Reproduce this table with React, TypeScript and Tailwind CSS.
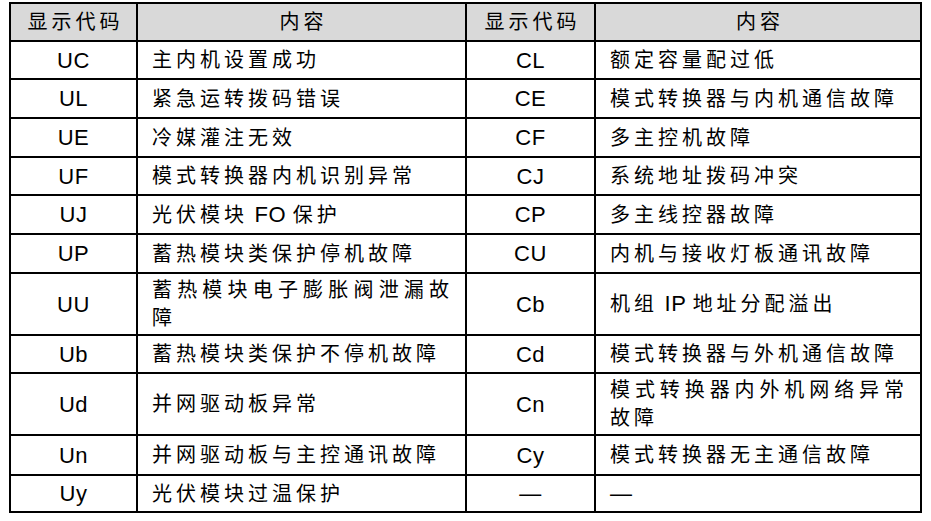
const ROWS: [string, string, string, string, number][] = [
  ["UC", "主内机设置成功", "CL", "额定容量配过低", 38],
  ["UL", "紧急运转拨码错误", "CE", "模式转换器与内机通信故障", 39],
  ["UE", "冷媒灌注无效", "CF", "多主控机故障", 39],
  ["UF", "模式转换器内机识别异常", "CJ", "系统地址拨码冲突", 38],
  ["UJ", "光伏模块 FO 保护", "CP", "多主线控器故障", 39],
  ["UP", "蓄热模块类保护停机故障", "CU", "内机与接收灯板通讯故障", 39],
  ["UU", "蓄热模块电子膨胀阀泄漏故障", "Cb", "机组 IP 地址分配溢出", 62],
  ["Ub", "蓄热模块类保护不停机故障", "Cd", "模式转换器与外机通信故障", 38],
  ["Ud", "并网驱动板异常", "Cn", "模式转换器内外机网络异常故障", 62],
  ["Un", "并网驱动板与主控通讯故障", "Cy", "模式转换器无主通信故障", 40],
  ["Uy", "光伏模块过温保护", "—", "—", 37],
];

function CodeCell({ text, h }: { text: string; h: number }) {
  return (
    <div
      className="flex items-center justify-center border-r-2 border-b-2 border-black text-[22px] tracking-[0.5px]"
      style={{ height: h }}
    >
      {text}
    </div>
  );
}

// latin runs (FO, IP) are set a bit larger and without the wide CJK spacing
function TextCell({ text, h }: { text: string; h: number }) {
  const parts = text.split(/( ?[A-Za-z—]+ ?)/).filter(Boolean);
  return (
    <div
      className="flex items-center border-r-2 border-b-2 border-black pl-[14px] pr-[12px]"
      style={{ height: h }}
    >
      <div className="w-full text-justify leading-[28px] tracking-[4px]">
        {parts.map((p, i) =>
          /[A-Za-z—]/.test(p) ? (
            <span key={i} className="text-[22px] tracking-[0.5px]">
              {p}
            </span>
          ) : (
            <span key={i}>{p}</span>
          )
        )}
      </div>
    </div>
  );
}

export default function App() {
  return (
    <div className="min-h-screen bg-white pt-[2px] pl-[9px] text-[20px] text-black font-['Liberation_Sans','Noto_Sans_CJK_SC',sans-serif]">
      <div className="grid w-[913px] grid-cols-[127px_329px_129px_326px] border-l-2 border-t-2 border-black">
        {/* header */}
        <div className="flex h-[38px] items-center justify-center border-r-2 border-b-2 border-black bg-[#d9d9d9] pl-[4px] tracking-[4px]">
          显示代码
        </div>
        <div className="flex h-[38px] items-center justify-center border-r-2 border-b-2 border-black bg-[#d9d9d9] pl-[4px] tracking-[4px]">
          内容
        </div>
        <div className="flex h-[38px] items-center justify-center border-r-2 border-b-2 border-black bg-[#d9d9d9] pl-[4px] tracking-[4px]">
          显示代码
        </div>
        <div className="flex h-[38px] items-center justify-center border-r-2 border-b-2 border-black bg-[#d9d9d9] pl-[4px] tracking-[4px]">
          内容
        </div>

        {ROWS.map(([c1, t1, c2, t2, h]) => (
          <div key={c1} className="contents">
            <CodeCell text={c1} h={h} />
            <TextCell text={t1} h={h} />
            <CodeCell text={c2} h={h} />
            <TextCell text={t2} h={h} />
          </div>
        ))}
      </div>
    </div>
  );
}
